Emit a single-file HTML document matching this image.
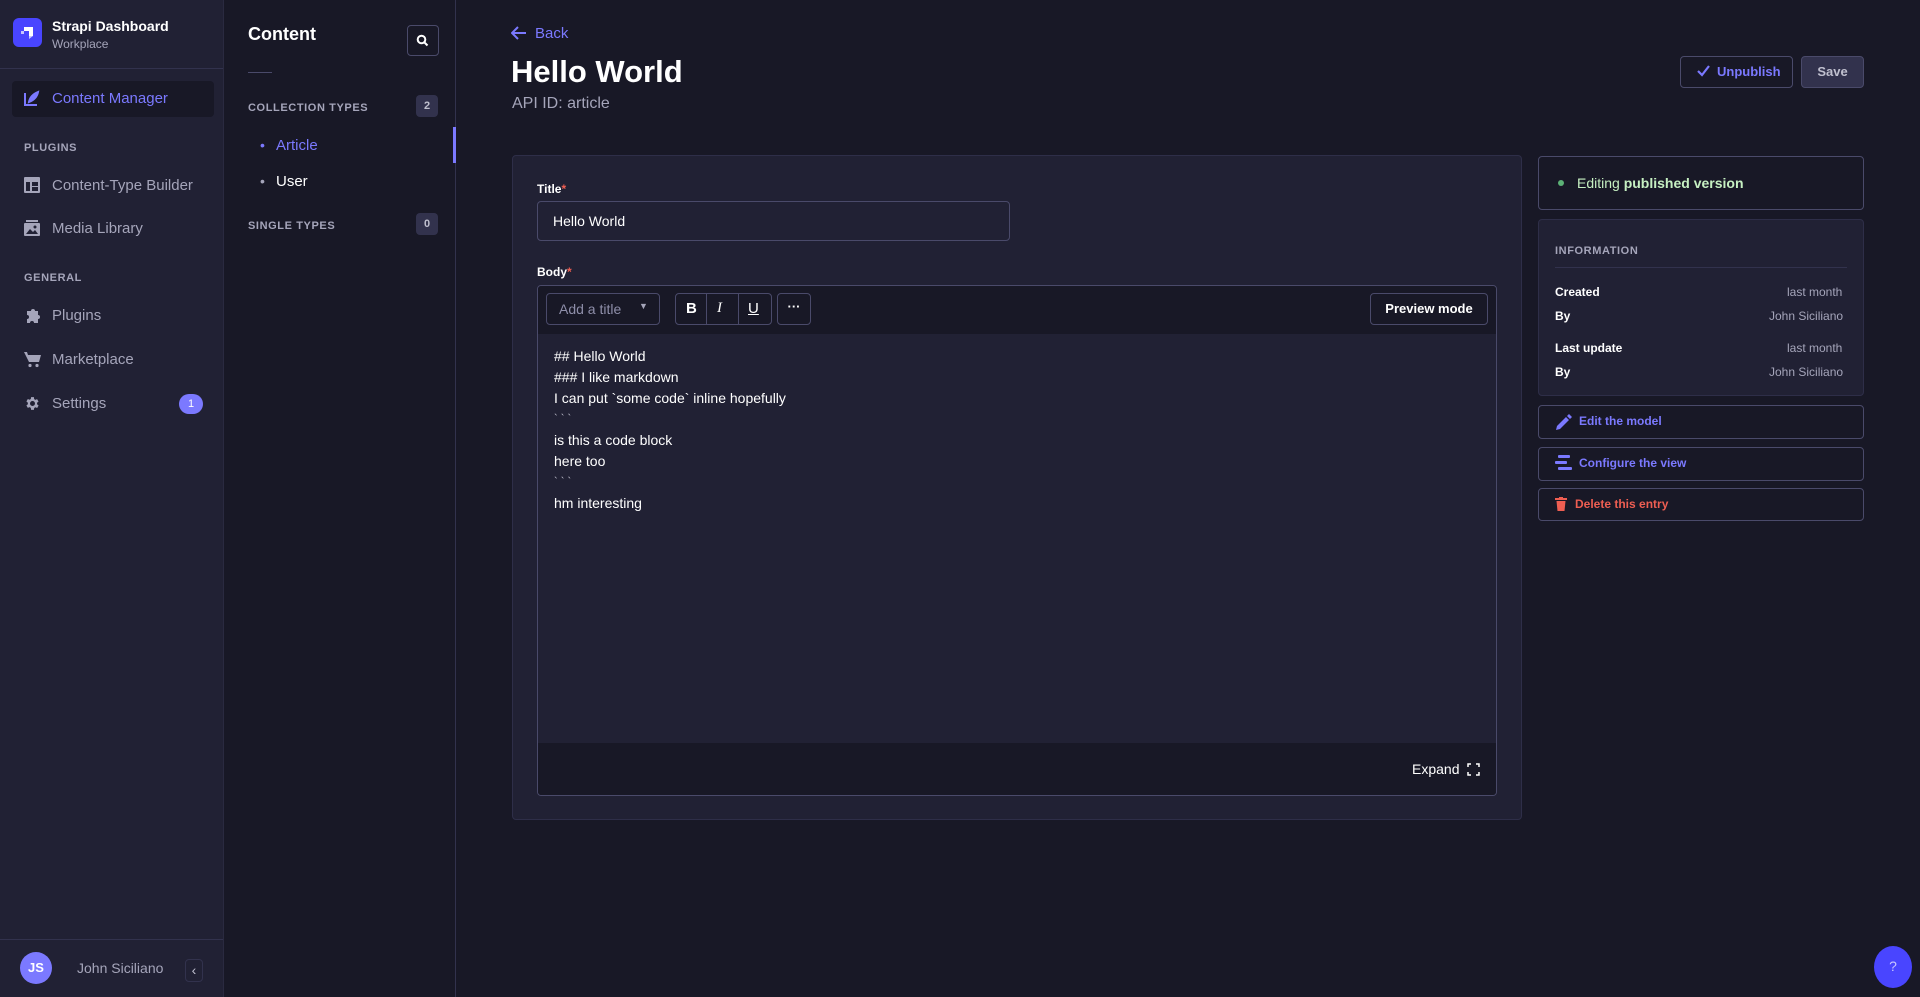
<!DOCTYPE html>
<html><head><meta charset="utf-8"><style>
*{box-sizing:border-box;margin:0;padding:0}
body{width:1920px;height:997px;background:#181826;font-family:"Liberation Sans",sans-serif;color:#fff;position:relative;overflow:hidden}
.a{position:absolute;white-space:nowrap}
.side{left:0;top:0;width:224px;height:997px;background:#212134;border-right:1px solid #2a2a40}
.sub{left:224px;top:0;width:232px;height:997px;background:#181826;border-right:1px solid #32324d}
.nav{color:#a5a5ba;font-size:15px}
.sec{color:#a5a5ba;font-size:11px;font-weight:bold;letter-spacing:.6px}
.badge{background:#32324d;color:#c0c0cf;font-size:11px;font-weight:bold;width:22px;height:22px;border-radius:4px;text-align:center;line-height:22px}
.btn{border:1px solid #4a4a6a;border-radius:4px;font-size:13px;font-weight:bold}
.row{font-size:12px}
.ed div{height:21px}
</style></head><body>
<div class="a side"></div>
<div class="a sub"></div>

<div class="a" style="left:13px;top:18px;width:29px;height:29px;border-radius:6px;background:#4945ff"></div>
<svg class="a" style="left:18px;top:23px" width="19" height="19" viewBox="0 0 19 19"><path d="M6 4h9v9h-4V8H6z" fill="#fff"/><path d="M3 8h3v3H3z" fill="#c8c6ff"/><path d="M11 13h4l-4 3z" fill="#c8c6ff"/></svg>
<div class="a" style="left:52px;top:18px;font-size:14px;font-weight:bold">Strapi Dashboard</div>
<div class="a" style="left:52px;top:37px;font-size:12px;color:#a5a5ba">Workplace</div>
<div class="a" style="left:0;top:68px;width:223px;height:1px;background:#32324d"></div>

<div class="a" style="left:12px;top:81px;width:202px;height:36px;background:#181826;border-radius:4px"></div>
<svg class="a" style="left:23px;top:90px" width="17" height="17" viewBox="0 0 17 17" fill="none" stroke="#7b79ff" stroke-width="2"><path d="M2 3v12h12"/><path d="M6 12c1-5 4-8 9-10-1 5-4 8-9 10z" fill="#7b79ff"/></svg>
<div class="a nav" style="left:52px;top:90px;color:#7b79ff">Content Manager</div>

<div class="a sec" style="left:24px;top:142px">PLUGINS</div>
<svg class="a" style="left:24px;top:177px" width="16" height="16" viewBox="0 0 16 16"><rect x="0" y="0" width="16" height="16" rx="1" fill="#a5a5ba"/><rect x="2" y="5" width="4" height="9" fill="#212134"/><rect x="8" y="5" width="6" height="4" fill="#212134"/><rect x="8" y="10" width="6" height="4" fill="#212134"/></svg>
<div class="a nav" style="left:52px;top:177px">Content-Type Builder</div>
<svg class="a" style="left:24px;top:220px" width="16" height="16" viewBox="0 0 16 16"><rect x="2" y="0" width="12" height="2" fill="#a5a5ba"/><rect x="0" y="3" width="16" height="13" rx="1" fill="#a5a5ba"/><path d="M2 14l4-5 3 3 2-2 3 4z" fill="#212134"/><circle cx="11" cy="7" r="1.5" fill="#212134"/></svg>
<div class="a nav" style="left:52px;top:220px">Media Library</div>

<div class="a sec" style="left:24px;top:272px">GENERAL</div>
<svg class="a" style="left:24px;top:307px" width="17" height="17" viewBox="0 0 17 17" fill="#a5a5ba"><path d="M3 4h4a2 2 0 1 1 4 0h3v4a2 2 0 1 1 0 4v4h-4a2 2 0 1 0-4 0H3v-4a2 2 0 1 0 0-4z"/></svg>
<div class="a nav" style="left:52px;top:307px">Plugins</div>
<svg class="a" style="left:24px;top:351px" width="17" height="17" viewBox="0 0 17 17" fill="#a5a5ba"><path d="M0 1h3l1 3h13l-2 7H5z"/><circle cx="6" cy="14.5" r="1.6"/><circle cx="13" cy="14.5" r="1.6"/></svg>
<div class="a nav" style="left:52px;top:351px">Marketplace</div>
<svg class="a" style="left:24px;top:395px" width="17" height="17" viewBox="0 0 24 24" fill="#a5a5ba"><path d="M19.4 13a7.5 7.5 0 0 0 0-2l2.1-1.6-2-3.5-2.5 1a7.4 7.4 0 0 0-1.7-1L15 3h-4l-.4 2.7a7.4 7.4 0 0 0-1.7 1l-2.5-1-2 3.5L6.5 11a7.5 7.5 0 0 0 0 2l-2.1 1.6 2 3.5 2.5-1a7.4 7.4 0 0 0 1.7 1L11 21h4l.4-2.7a7.4 7.4 0 0 0 1.7-1l2.5 1 2-3.5zM13 15.5a3.5 3.5 0 1 1 0-7 3.5 3.5 0 0 1 0 7z" transform="translate(-1 0)"/></svg>
<div class="a nav" style="left:52px;top:395px">Settings</div>
<div class="a" style="left:179px;top:394px;width:24px;height:20px;border-radius:10px;background:#7b79ff;font-size:11px;text-align:center;line-height:20px">1</div>

<div class="a" style="left:0;top:939px;width:223px;height:1px;background:#32324d"></div>
<div class="a" style="left:20px;top:952px;width:32px;height:32px;border-radius:50%;background:#7b79ff;font-size:13px;font-weight:bold;text-align:center;line-height:32px">JS</div>
<div class="a" style="left:77px;top:960px;font-size:14px;color:#a5a5ba">John Siciliano</div>
<div class="a" style="left:185px;top:959px;width:18px;height:23px;border:1px solid #32324d;border-radius:4px;color:#c0c0cf;font-size:14px;text-align:center;line-height:20px">‹</div>

<div class="a" style="left:248px;top:24px;font-size:18px;font-weight:bold">Content</div>
<div class="a" style="left:407px;top:25px;width:32px;height:31px;border:1px solid #4a4a6a;border-radius:4px"></div>
<svg class="a" style="left:416px;top:34px" width="13" height="13" viewBox="0 0 13 13" fill="none" stroke="#fff" stroke-width="2"><circle cx="5.5" cy="5.5" r="3.8"/><path d="M8.5 8.5l3 3"/></svg>
<div class="a" style="left:248px;top:72px;width:24px;height:1px;background:#4a4a6a"></div>
<div class="a sec" style="left:248px;top:102px">COLLECTION TYPES</div>
<div class="a badge" style="left:416px;top:95px">2</div>
<div class="a" style="left:260px;top:137px;font-size:14px;color:#7b79ff">•</div>
<div class="a" style="left:276px;top:137px;font-size:15px;color:#7b79ff">Article</div>
<div class="a" style="left:453px;top:127px;width:3px;height:36px;background:#7b79ff"></div>
<div class="a" style="left:260px;top:173px;font-size:14px;color:#a5a5ba">•</div>
<div class="a" style="left:276px;top:173px;font-size:15px">User</div>
<div class="a sec" style="left:248px;top:220px">SINGLE TYPES</div>
<div class="a badge" style="left:416px;top:213px">0</div>

<svg class="a" style="left:511px;top:26px" width="16" height="14" viewBox="0 0 16 14" fill="none" stroke="#7b79ff" stroke-width="2"><path d="M15 7H2M7 1L1 7l6 6"/></svg>
<div class="a" style="left:535px;top:25px;font-size:15px;color:#7b79ff">Back</div>
<div class="a" style="left:511px;top:54px;font-size:31px;font-weight:bold">Hello World</div>
<div class="a" style="left:512px;top:95px;font-size:16px;color:#a5a5ba">API ID: article</div>

<div class="a btn" style="left:1680px;top:56px;width:113px;height:32px;color:#7b79ff;background:#181826"></div>
<svg class="a" style="left:1697px;top:65px" width="13" height="12" viewBox="0 0 13 12" fill="none" stroke="#7b79ff" stroke-width="2.2"><path d="M1 6l4 4 7-9"/></svg>
<div class="a" style="left:1717px;top:64px;font-size:13px;font-weight:bold;color:#7b79ff">Unpublish</div>
<div class="a btn" style="left:1801px;top:56px;width:63px;height:32px;background:#32324d;border-color:#4a4a6a;color:#c0c0cf;text-align:center;line-height:30px">Save</div>

<div class="a" style="left:512px;top:155px;width:1010px;height:665px;background:#212134;border:1px solid #2e2e48;border-radius:4px"></div>
<div class="a" style="left:537px;top:182px;font-size:12px;font-weight:bold">Title<span style="color:#ee5e52">*</span></div>
<div class="a" style="left:537px;top:201px;width:473px;height:40px;border:1px solid #4a4a6a;border-radius:4px;background:#212134"></div>
<div class="a" style="left:553px;top:213px;font-size:14px">Hello World</div>
<div class="a" style="left:537px;top:265px;font-size:12px;font-weight:bold">Body<span style="color:#ee5e52">*</span></div>
<div class="a" style="left:537px;top:285px;width:960px;height:511px;border:1px solid #4a4a6a;border-radius:4px;background:#212134;overflow:hidden">
  <div style="position:absolute;left:0;top:0;width:100%;height:48px;background:#181826"></div>
  <div style="position:absolute;left:0;bottom:0;width:100%;height:52px;background:#181826"></div>
</div>
<div class="a" style="left:546px;top:293px;width:114px;height:32px;border:1px solid #4a4a6a;border-radius:4px"></div>
<div class="a" style="left:559px;top:301px;font-size:14px;color:#8e8ea9">Add a title</div>
<div class="a" style="left:639px;top:301px;font-size:9px;color:#a5a5ba">▼</div>
<div class="a" style="left:675px;top:293px;width:97px;height:32px;border:1px solid #4a4a6a;border-radius:4px"></div>
<div class="a" style="left:706px;top:293px;width:1px;height:32px;background:#4a4a6a"></div>
<div class="a" style="left:738px;top:293px;width:1px;height:32px;background:#4a4a6a"></div>
<div class="a" style="left:686px;top:300px;font-size:15px;font-weight:bold">B</div>
<div class="a" style="left:717px;top:300px;font-size:15px;font-style:italic;font-family:'Liberation Serif',serif">I</div>
<div class="a" style="left:748px;top:300px;font-size:15px;text-decoration:underline">U</div>
<div class="a" style="left:777px;top:293px;width:34px;height:32px;border:1px solid #4a4a6a;border-radius:4px;text-align:center;line-height:26px;font-size:13px;font-weight:bold">···</div>
<div class="a btn" style="left:1370px;top:293px;width:118px;height:32px;text-align:center;line-height:30px;background:#181826">Preview mode</div>
<div class="a ed" style="left:554px;top:346px;font-size:14px;line-height:21px">
<div>## Hello World</div>
<div>### I like markdown</div>
<div>I can put &#96;some code&#96; inline hopefully</div>
<div style="font-size:11px;color:#c0c0cf">&#96; &#96; &#96;</div>
<div>is this a code block</div>
<div>here too</div>
<div style="font-size:11px;color:#c0c0cf">&#96; &#96; &#96;</div>
<div>hm interesting</div>
</div>
<div class="a" style="left:1412px;top:761px;font-size:14px">Expand</div>
<svg class="a" style="left:1467px;top:763px" width="13" height="13" viewBox="0 0 13 13" fill="none" stroke="#fff" stroke-width="1.5"><path d="M1 4V1h3M9 1h3v3M12 9v3H9M4 12H1V9"/></svg>

<div class="a" style="left:1538px;top:156px;width:326px;height:54px;border:1px solid #4a4a6a;border-radius:4px"></div>
<div class="a" style="left:1558px;top:180px;width:6px;height:6px;border-radius:50%;background:#5cb176"></div>
<div class="a" style="left:1577px;top:175px;font-size:14px;color:#c6f0c2">Editing <b>published version</b></div>
<div class="a" style="left:1538px;top:219px;width:326px;height:177px;border:1px solid #2e2e48;border-radius:4px;background:#212134"></div>
<div class="a sec" style="left:1555px;top:245px">INFORMATION</div>
<div class="a" style="left:1555px;top:267px;width:292px;height:1px;background:#32324d"></div>
<div class="a row" style="left:1555px;top:285px;font-weight:bold">Created</div>
<div class="a row" style="left:1787px;top:285px;color:#a5a5ba">last month</div>
<div class="a row" style="left:1555px;top:309px;font-weight:bold">By</div>
<div class="a row" style="left:1769px;top:309px;color:#a5a5ba">John Siciliano</div>
<div class="a row" style="left:1555px;top:341px;font-weight:bold">Last update</div>
<div class="a row" style="left:1787px;top:341px;color:#a5a5ba">last month</div>
<div class="a row" style="left:1555px;top:365px;font-weight:bold">By</div>
<div class="a row" style="left:1769px;top:365px;color:#a5a5ba">John Siciliano</div>

<div class="a" style="left:1538px;top:405px;width:326px;height:34px;border:1px solid #4a4a6a;border-radius:4px"></div>
<svg class="a" style="left:1555px;top:414px" width="17" height="17" viewBox="0 0 17 17" fill="#7b79ff"><path d="M1 16l1-4 9-9 3 3-9 9zM12 2l2-2 3 3-2 2z"/></svg>
<div class="a" style="left:1579px;top:414px;font-size:12px;font-weight:bold;color:#7b79ff">Edit the model</div>
<div class="a" style="left:1538px;top:447px;width:326px;height:34px;border:1px solid #4a4a6a;border-radius:4px"></div>
<svg class="a" style="left:1555px;top:455px" width="17" height="17" viewBox="0 0 17 17" fill="#7b79ff"><rect x="3" y="0" width="12" height="3" rx="1"/><rect x="0" y="6" width="12" height="3" rx="1"/><rect x="3" y="12" width="14" height="3" rx="1"/></svg>
<div class="a" style="left:1579px;top:456px;font-size:12px;font-weight:bold;color:#7b79ff">Configure the view</div>
<div class="a" style="left:1538px;top:488px;width:326px;height:33px;border:1px solid #4a4a6a;border-radius:4px"></div>
<svg class="a" style="left:1555px;top:497px" width="12" height="14" viewBox="0 0 12 14" fill="#ee5e52"><rect x="0" y="1" width="12" height="2"/><rect x="4" y="0" width="4" height="2"/><path d="M1.5 4h9l-1 10h-7z"/></svg>
<div class="a" style="left:1575px;top:497px;font-size:12px;font-weight:bold;color:#ee5e52">Delete this entry</div>

<div class="a" style="left:1874px;top:946px;width:38px;height:42px;border-radius:50%;background:#4945ff;color:#c8c6ff;font-size:14px;text-align:center;line-height:40px">?</div>
</body></html>
